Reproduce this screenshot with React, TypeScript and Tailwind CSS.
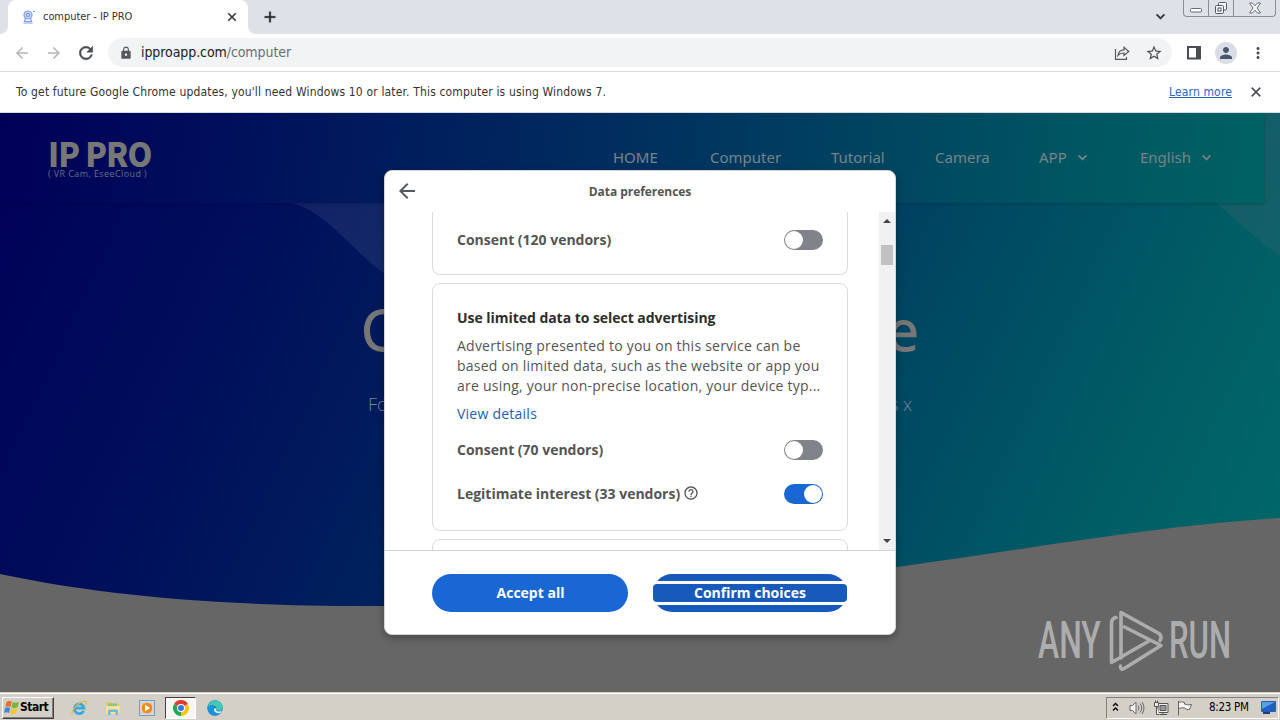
import type { ReactNode } from "react";
import { MdAdd, MdArrowBack, MdArrowForward, MdClose, MdHelpOutline, MdKeyboardArrowDown, MdLock, MdMoreVert, MdPerson, MdRefresh, MdStarBorder } from "react-icons/md";

function CameraFavicon() {
  return (
    <svg className="h-3.5 w-3.5" viewBox="0 0 14 14" fill="none" stroke="#7d9fe8" strokeWidth="1.2">
      <circle cx="6" cy="5" r="4" fill="#c9d8fa" />
      <circle cx="6" cy="5" r="1.6" />
      <path d="M3.5 8.5 2.5 11.5h7L8.5 8.5M1.5 13h9M11 1.5h2" />
    </svg>
  );
}

function TabStrip() {
  return (
    <div className="relative flex h-[34px] shrink-0 bg-[#dee1e8]">
      <div className="w-2 bg-white"><div className="h-full rounded-br-lg bg-[#dee1e8]" /></div>
      <div className="flex w-60 items-center rounded-t-lg bg-white pl-[14px] pr-[9px]">
        <CameraFavicon />
        <span className="ml-[7px] flex-1 whitespace-nowrap text-[11px] tracking-[-0.06px] text-[#333]">computer - IP PRO</span>
        <MdClose className="h-3.5 w-3.5 text-[#333] [&>path:first-child]:stroke-none" stroke="currentColor" strokeWidth="0.8" />
      </div>
      <div className="w-2 bg-white"><div className="h-full rounded-bl-lg bg-[#dee1e8]" /></div>
      <div className="flex items-center pl-[5px]">
        <MdAdd className="h-[18px] w-[18px] text-[#222] [&>path:first-child]:stroke-none" stroke="currentColor" strokeWidth="0.5" />
      </div>
      <div className="ml-auto flex items-start">
        <MdKeyboardArrowDown className="mr-3.5 mt-2 h-[17px] w-[17px] text-[#333] [&>path:first-child]:stroke-none" stroke="currentColor" strokeWidth="0.8" />
        <div className="mr-1 flex h-[17px] w-[93px] rounded-b-[4px] border border-t-0 border-[#8b8e94]">
          <div className="flex w-[25px] items-center justify-center border-r border-[#8b8e94] pt-1">
            <svg className="h-1.5 w-3" viewBox="0 0 12 6"><rect x=".5" y="1.5" width="11" height="3.5" rx="1" fill="#fff" stroke="#666b73" /></svg>
          </div>
          <div className="flex w-[25px] items-center justify-center border-r border-[#8b8e94]">
            <svg className="h-3 w-3.5" viewBox="0 0 14 12" fill="#f4f5f7" stroke="#555a62"><rect x="4.5" y=".5" width="8" height="7.500" rx="1" /><rect x="1.500" y="3.500" width="8" height="8" rx="1" /><rect x="4" y="6" width="3" height="3" /></svg>
          </div>
          <div className="flex flex-1 items-center justify-center">
            <svg className="h-3 w-3.5" viewBox="0 0 14 12" fill="#fff" stroke="#666b73"><path d="M1.500 1h3L7 3.800 9.500 1h3L9 6l3.500 5h-3L7 8.200 4.500 11h-3L5 6z" /></svg>
          </div>
        </div>
      </div>
    </div>
  );
}

function Toolbar() {
  return (
    <div className="flex h-[38px] shrink-0 items-center border-b border-[#dcdcde] bg-white pl-[13px] pr-[13px]">
      <MdArrowBack className="h-[18px] w-[18px] text-[#b5b5b5]" />
      <MdArrowForward className="ml-[14px] h-[18px] w-[18px] text-[#b5b5b5]" />
      <MdRefresh className="ml-[13px] h-5 w-5 text-[#4a4d51] [&>path:first-child]:stroke-none" stroke="currentColor" strokeWidth="0.6" />
      <div className="ml-3 flex h-[29px] w-[1064px] items-center rounded-full bg-[#f1f3f4] pl-[11px] pr-[9px]">
        <MdLock className="h-3.5 w-3.5 text-[#55585c]" />
        <span className="ml-2 text-[14px] tracking-[-0.08px] text-[#202124]">ipproapp.com<span className="text-[#6b6f74]">/computer</span></span>
        <svg className="ml-auto h-4 w-4" viewBox="0 0 16 16" fill="none" stroke="#55585c" strokeWidth="1.2"><path d="M1.500 4v10.300h11V12M4 10.500c.5-4 3-5.600 6-5.600V2.300L14.800 6.500 10 10.500V8C7.500 8 5.500 8.500 4 10.500Z" /></svg>
        <MdStarBorder className="ml-[15px] h-[18px] w-[18px] text-[#4a4d51]" />
      </div>
      <svg className="ml-[14px] h-4 w-4" viewBox="0 0 16 16"><path fill="#4a4d51" fillRule="evenodd" d="M1 1h14v13.500H1zM3 3v9.500h7V3z" /></svg>
      <div className="ml-[13px] flex h-[22px] w-[22px] items-center justify-center rounded-full bg-[#dadde3]">
        <MdPerson className="h-[18px] w-[18px] text-[#46566f]" />
      </div>
      <MdMoreVert className="ml-3 h-[18px] w-[18px] text-[#4a4d51]" />
    </div>
  );
}

function InfoBar() {
  return (
    <div className="flex h-[41px] shrink-0 items-center border-b border-[#d4dbe3] bg-white pl-4 pr-4 text-[12px] text-[#333]">
      <span className="whitespace-nowrap tracking-[0.16px]">To get future Google Chrome updates, you'll need Windows 10 or later. This computer is using Windows 7.</span>
      <a className="ml-auto tracking-[0.15px] text-[#2765c4] underline">Learn more</a>
      <MdClose className="ml-4 h-4 w-4 text-[#4a4d51] [&>path:first-child]:stroke-none" stroke="currentColor" strokeWidth="0.6" />
    </div>
  );
}

const navLinks = [
  { label: "HOME", menu: false, width: "w-[97px]" },
  { label: "Computer", menu: false, width: "w-[121px]" },
  { label: "Tutorial", menu: false, width: "w-[104px]" },
  { label: "Camera", menu: false, width: "w-[104px]" },
  { label: "APP", menu: true, width: "w-[101px]" },
  { label: "English", menu: true, width: "w-[90px]" },
];

function Hero() {
  return (
    <div className="relative flex-1 overflow-hidden bg-[linear-gradient(115deg,#000058_0%,#00105b_22%,#00285e_45%,#004862_66%,#006066_86%,#006969_100%)]">
      <svg className="absolute inset-0 h-full w-full" viewBox="0 0 1280 579">
        <path d="M292 90C328 100 352 138 386 162L500 200V90Z" fill="#fff" opacity=".075" />
        <path d="M1215 88Q1248 120 1280 143V0H1215Z" fill="#8a6a78" opacity=".14" />
        <path d="M0 461C90 480 210 494 384 493C560 493 740 475 897 454C1030 436 1150 413 1280 405V579H0Z" fill="#666" />
      </svg>
      <div className="relative flex h-[90px] w-[1264px] items-center bg-[linear-gradient(98deg,#000058_0%,#000f5b_18%,#00285e_43%,#004060_65%,#005562_84%,#006263_100%)] pl-12 shadow-[0_1px_3px_rgba(0,0,0,0.2)]">
        <div className="flex w-[565px] flex-col text-[#777]">
          <div className="h-[27px] w-max origin-left scale-x-[0.96] whitespace-nowrap pt-0.5 font-['Noto_Sans_CJK_SC',sans-serif] text-[33px] font-black leading-[27px] tracking-[-1px]">IP PRO</div>
          <div className="mt-1 whitespace-nowrap font-['Open_Sans',sans-serif] text-[9px] leading-[10px] tracking-[0.4px] text-[#657087]">( VR Cam, EseeCloud )</div>
        </div>
        <div className="flex pb-0.5 font-['Noto_Sans',sans-serif] text-[15px] text-[#75858a]">
          {navLinks.map((link) => (
            <div key={link.label} className={`flex shrink-0 items-center whitespace-nowrap ${link.width}`}>
              {link.label}
              {link.menu && <MdKeyboardArrowDown className="ml-[7px] h-[17px] w-[17px] [&>path:first-child]:stroke-none" stroke="currentColor" strokeWidth="0.8" />}
            </div>
          ))}
        </div>
      </div>
      <div className="relative mx-auto flex w-[558px] justify-between pt-[86px] font-['Open_Sans',sans-serif] text-[57px] leading-[80px] text-[#777] [-webkit-text-stroke:1px_#777]">
        <span>C</span><span>e</span>
      </div>
      <div className="relative mx-auto flex w-[544px] justify-between pt-[21px] font-['Open_Sans',sans-serif] text-[18px] font-light leading-7 text-[#758498]">
        <span>Fo</span><span>s x</span>
      </div>
    </div>
  );
}

function Toggle({ on = false }: { on?: boolean }) {
  return (
    <div className={on ? "flex h-5 w-[39px] items-center justify-end rounded-full bg-[#1967d2] p-px" : "flex h-5 w-[39px] items-center rounded-full bg-[#80848a] p-px"}>
      <div className="h-[18px] w-[18px] rounded-full bg-white" />
    </div>
  );
}

function PreferenceRow({ label, on, help }: { label: string; on?: boolean; help?: boolean }) {
  return (
    <div className="flex h-5 items-center justify-between text-[14px] font-bold text-[#555]">
      <div className="flex items-center whitespace-nowrap pb-0.5 tracking-[-0.01px]">
        {label}
        {help && <MdHelpOutline className="ml-[3px] h-4 w-4" />}
      </div>
      <Toggle on={on} />
    </div>
  );
}

function PreferenceCard({ className, children }: { className: string; children?: ReactNode }) {
  return <div className={`shrink-0 border border-[#d9dadc] px-6 ${className}`}>{children}</div>;
}

function ConsentDialog() {
  return (
    <div className="absolute left-[384px] top-[170px] flex h-[465px] w-[512px] flex-col overflow-hidden rounded-lg border border-[#d2d6dc] bg-white font-['Open_Sans','Noto_Sans',sans-serif] shadow-[0_3px_8px_rgba(0,0,0,0.3)]">
      <div className="flex h-[41px] shrink-0 items-center">
        <MdArrowBack className="mb-0.5 ml-2.5 h-6 w-6 text-[#55585c]" />
        <div className="flex-1 pr-[34px] text-center text-[12px] font-bold tracking-[-0.05px] text-[#555]">Data preferences</div>
      </div>
      <div className="flex h-[339px] shrink-0 border-b border-[#d5d6d8]">
        <div className="ml-[47px] flex w-[416px] flex-col gap-2 overflow-hidden">
          <PreferenceCard className="h-[63px] rounded-b-lg border-t-0 pt-[18px]">
            <PreferenceRow label="Consent (120 vendors)" />
          </PreferenceCard>
          <PreferenceCard className="h-[248px] rounded-lg pt-6">
            <div className="whitespace-nowrap text-[14px] font-bold leading-5 tracking-[-0.04px] text-[#2d2d2d]">Use limited data to select advertising</div>
            <div className="mt-2 whitespace-nowrap text-[14px] leading-5 tracking-[0.23px] text-[#555]">
              <div>Advertising presented to you on this service can be</div>
              <div>based on limited data, such as the website or app you</div>
              <div>are using, your non-precise location, your device typ...</div>
            </div>
            <div className="mt-2 text-[14px] leading-5 tracking-[0.24px] text-[#1a60b8]">View details</div>
            <div className="mt-4 flex flex-col gap-6">
              <PreferenceRow label="Consent (70 vendors)" />
              <PreferenceRow label="Legitimate interest (33 vendors)" help on />
            </div>
          </PreferenceCard>
          <PreferenceCard className="h-20 rounded-lg" />
        </div>
        <div className="ml-auto flex w-4 flex-col items-center bg-[#f1f1f1]">
          <svg className="h-[17px] w-4 shrink-0" viewBox="0 0 16 17"><path d="M4 11l4-4 4 4z" fill="#444" /></svg>
          <div className="mt-4 h-5 w-3 bg-[#c1c1c1]" />
          <svg className="mt-auto h-[17px] w-4 shrink-0" viewBox="0 0 16 17"><path d="M4 6l4 4 4-4z" fill="#444" /></svg>
        </div>
      </div>
      <div className="flex flex-1 items-start gap-[25px] px-[47px] pt-[23px] text-[14px] font-bold text-white">
        <div className="flex h-[38px] w-[196px] items-center justify-center rounded-full bg-[#1967d2] pb-0.5 pl-px">Accept all</div>
        <div className="flex h-[38px] w-[194px] flex-col justify-center rounded-[19px] bg-[#185abc]">
          <div className="border-y-[3px] border-white bg-white">
            <div className="flex h-[18px] items-center justify-center rounded bg-[#185abc] pb-0.5">Confirm choices</div>
          </div>
        </div>
      </div>
    </div>
  );
}

function Watermark() {
  return (
    <div className="absolute left-[1038px] top-[608px] flex h-16 items-center text-[#adadad]">
      <div className="w-[71px] pt-0.5"><div className="w-max origin-left scale-x-[0.625] font-['Roboto',sans-serif] text-[51px] font-medium leading-[60px]">ANY</div></div>
      <svg className="h-16 w-[54px] shrink-0" viewBox="0 0 54 64" fill="none" stroke="currentColor" strokeWidth="3.600" strokeLinejoin="round" strokeLinecap="round">
        <path d="M7 9.500Q2.500 10 2.500 16V54.500L40 33" />
        <path d="M12 50V4.500L50 25.500Q53.500 28 51 32.500M15.500 19 52 37.500 16 60Q11.500 63 11.500 58" />
      </svg>
      <div className="ml-1.5 w-[62px] pt-0.5"><div className="w-max origin-left scale-x-[0.61] font-['Roboto',sans-serif] text-[51px] font-medium leading-[60px]">RUN</div></div>
    </div>
  );
}

function WindowsLogo() {
  return (
    <svg className="h-[15px] w-4" viewBox="0 0 16 15">
      <path d="M2.500 2Q5 0 7.800 1.600L6.500 7Q4 5.500 1.300 7Z" fill="#ed6a2d" />
      <path d="M8.700 2Q12 3.500 15 2L13.500 7.500Q10.500 9 7.300 7.500Z" fill="#78b83b" />
      <path d="M1 8Q3.500 6.500 6.200 8L5 13Q2.500 11.500 0 13Z" fill="#4584d4" />
      <path d="M7 8.500Q10 10 13.200 8.500L12 13.500Q9 15 5.800 13.500Z" fill="#f6c530" />
    </svg>
  );
}

function ChromeLogo() {
  return (
    <svg className="h-4 w-4" viewBox="0 0 16 16">
      <path d="M8 8 1.070 4A8 8 0 0 1 14.930 4Z" fill="#e33b2e" />
      <path d="M8 8 14.930 4A8 8 0 0 1 8 16Z" fill="#f9c51d" />
      <path d="M8 8V16A8 8 0 0 1 1.070 4Z" fill="#2fa44f" />
      <circle cx="8" cy="8" r="4" fill="#fff" />
      <circle cx="8" cy="8" r="3" fill="#3577e5" />
    </svg>
  );
}

function Taskbar() {
  return (
    <div className="flex h-7 shrink-0 items-center border-t border-[#d4d0c8] bg-[#d4d0c8] shadow-[inset_0_1px_0_#fff]">
      <div className="ml-0.5 mt-0.5 flex h-[22px] w-[52px] items-center border border-b-[#404040] border-l-white border-r-[#404040] border-t-white pl-px text-[12px] font-bold tracking-[-0.5px] text-black shadow-[inset_-1px_-1px_0_#808080]">
        <WindowsLogo /><span className="pb-0.5">Start</span>
      </div>
      <div className="ml-[17px] mt-0.5 flex items-center">
        <svg className="h-4 w-4" viewBox="0 0 16 16" fill="none">
          <path d="M12.600 10.800A4.800 4.800 0 1 1 13 8.200H4" stroke="#3ba8e0" strokeWidth="2.800" />
          <path d="M1.500 14.500C-1 11 9 0 14.700 1.600C15.800 2 15.300 4 14.200 5" stroke="#e2b93b" strokeWidth="1.100" />
        </svg>
        <svg className="ml-[18px] h-4 w-4" viewBox="0 0 16 16">
          <path d="M1 2h5l1 1.500h7V14H1z" fill="#e7c966" /><path d="M3 3.500h9V7H3z" fill="#8bc58b" /><path d="M1 6h14l-1 8H1z" fill="#f6e29a" /><path d="M3 15v-4q0-1.500 2-1.500h6q2 0 2 1.500v4h-2.500v-3h-5v3z" fill="#75b6df" />
        </svg>
        <svg className="ml-[18px] h-4 w-4" viewBox="0 0 16 16">
          <path d="M.5.500h15v15H.5z" fill="#c8def0" stroke="#6d9dc7" /><path d="M2.500 2.500h11v11h-11z" fill="#f6c28a" /><circle cx="8" cy="8" r="5.200" fill="#f18a1c" /><path d="M6 4.500 11 8l-5 3.500z" fill="#fff" />
        </svg>
        <div className="ml-[10px] flex h-[22px] w-[31px] items-center justify-center border border-b-white border-l-[#404040] border-r-white border-t-[#404040] bg-[#f7f6f4]"><ChromeLogo /></div>
        <svg className="ml-[11px] h-4 w-4" viewBox="0 0 16 16">
          <circle cx="8" cy="8" r="7.700" fill="#1677ca" />
          <path d="M.6 7C2 1 9-1.500 13.500 2.500C16 5 16.300 8.500 14 10.200C12 11.500 9 10.500 9.500 8.500C10 6 4.500 3.500.6 7Z" fill="#42c9b3" />
          <path d="M.5 7C5 3.500 8 6 7 8.500C6 11.500 9 14 13.500 12.500C9.500 17 3.500 16 1.500 12Z" fill="#1c91dc" />
          <path d="M9.500 8.500C8 11.500 12 12.300 15 10.500L13.500 13C9 14 6 11 7.200 8.200Z" fill="#e1eef0" />
        </svg>
      </div>
      <div className="ml-auto mr-px mt-0.5 flex h-[22px] w-[173px] items-center border border-b-white border-l-[#808080] border-r-white border-t-[#808080] pl-[5px] pr-0.5">
        <svg className="mb-0.5 h-2.5 w-[7px]" viewBox="0 0 7 10" fill="none" stroke="#000" strokeWidth="1.300"><path d="m1 4 2.500-2.500L6 4M1 8.500 3.500 6 6 8.500" /></svg>
        <svg className="ml-2.5 h-4 w-4" viewBox="0 0 16 16" fill="#f4f4f4" stroke="#666"><path d="M1 5.500h2.500L7 2v12L3.500 10.500H1z" /><path d="M9 5.500q2 2.500 0 5M11 3.500q3.500 4.500 0 9M13 2q4 6 0 12" fill="none" /></svg>
        <svg className="ml-2 h-4 w-4" viewBox="0 0 16 16" fill="#eee" stroke="#555"><path d="M5 3.500h10v9H5zM7 14.500h7M10 12.500v2" /><path d="M7 5.500h6v5H7z" fill="#999" /><path d="M1.500 2.500h4v4h-4zM2.500.5v2M4.500.5v2M3.500 6.500v8h3" /></svg>
        <svg className="ml-2 h-4 w-4" viewBox="0 0 16 16" fill="#f6f6f6" stroke="#666"><path d="M1.500 1v14.500M1.500 2.500Q4 1 7.500 2.500v1.500q3 1.500 7 .5l-2 5q-3 .5-5-1.500-3-.8-6 .5" /></svg>
        <span className="ml-4 whitespace-nowrap text-[11.500px] tracking-[-0.3px] text-black">8:23 PM</span>
        <svg className="ml-auto h-[13px] w-[15px]" viewBox="0 0 15 13"><rect width="15" height="11" rx="1" fill="#245fc0" /><path d="M1 1h13L1 8z" fill="#58a0e7" /><path d="M2 11h7v2H2z" fill="#203d7b" /></svg>
      </div>
    </div>
  );
}

export default function App() {
  return (
    <div className="relative flex h-[720px] w-[1280px] flex-col overflow-hidden font-['DejaVu_Sans_Condensed','DejaVu_Sans',sans-serif]">
      <TabStrip />
      <Toolbar />
      <InfoBar />
      <Hero />
      <Taskbar />
      <ConsentDialog />
      <Watermark />
    </div>
  );
}
